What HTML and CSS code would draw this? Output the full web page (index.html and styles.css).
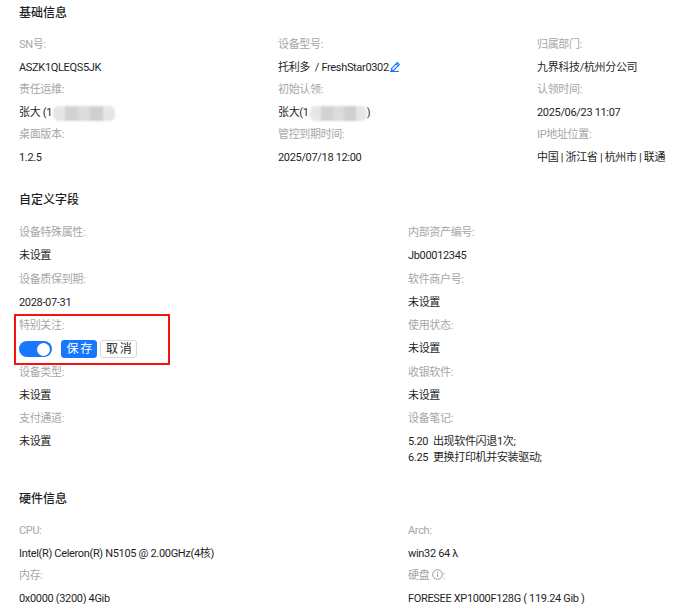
FILE: index.html
```html
<!DOCTYPE html>
<html lang="zh-CN">
<head>
<meta charset="utf-8">
<title>设备详情</title>
<link rel="stylesheet" href="styles.css">
</head>
<body>
<main class="page">
  <section class="basic">
    <h2 class="title">基础信息</h2>
    <div class="grid three">
      <div class="cell"><div class="label">SN号:</div><div class="value">ASZK1QLEQS5JK</div></div>
      <div class="cell"><div class="label">设备型号:</div><div class="value">托利多&nbsp; / FreshStar0302<svg class="pen" width="11" height="11" viewBox="0 0 11 11" fill="none" stroke="#1677ff" stroke-width="1.2"><path d="M1.5 7.6 7.3 1.6l2 2L3.5 9.4H1.5z"/><path d="M6.2 2.9l1.9 1.9"/><path d="M0 10.5h9"/></svg></div></div>
      <div class="cell"><div class="label">归属部门:</div><div class="value">九界科技/杭州分公司</div></div>
      <div class="cell"><div class="label">责任运维:</div><div class="value">张大 (1<span class="mask m1"></span></div></div>
      <div class="cell"><div class="label">初始认领:</div><div class="value">张大(1<span class="mask m2"></span>)</div></div>
      <div class="cell"><div class="label">认领时间:</div><div class="value">2025/06/23 11:07</div></div>
      <div class="cell"><div class="label">桌面版本:</div><div class="value">1.2.5</div></div>
      <div class="cell"><div class="label">管控到期时间:</div><div class="value">2025/07/18 12:00</div></div>
      <div class="cell"><div class="label">IP地址位置:</div><div class="value">中国 | 浙江省 | 杭州市 | 联通</div></div>
    </div>
  </section>
  <section class="custom">
    <h2 class="title">自定义字段</h2>
    <div class="grid two tall">
      <div class="cell"><div class="label">设备特殊属性:</div><div class="value">未设置</div></div>
      <div class="cell"><div class="label">内部资产编号:</div><div class="value">Jb00012345</div></div>
      <div class="cell"><div class="label">设备质保到期:</div><div class="value">2028-07-31</div></div>
      <div class="cell"><div class="label">软件商户号:</div><div class="value">未设置</div></div>
      <div class="cell highlighted">
        <div class="label">特别关注:</div>
        <div class="value controls">
          <span class="switch"><span class="knob"></span></span>
          <button class="btn primary">保 存</button>
          <button class="btn">取 消</button>
        </div>
      </div>
      <div class="cell"><div class="label">使用状态:</div><div class="value">未设置</div></div>
      <div class="cell"><div class="label">设备类型:</div><div class="value">未设置</div></div>
      <div class="cell"><div class="label">收银软件:</div><div class="value">未设置</div></div>
      <div class="cell"><div class="label">支付通道:</div><div class="value">未设置</div></div>
      <div class="cell"><div class="label">设备笔记:</div><div class="value notes">5.20&nbsp; 出现软件闪退1次;<br>6.25&nbsp; 更换打印机并安装驱动;</div></div>
    </div>
  </section>
  <section class="hardware">
    <h2 class="title">硬件信息</h2>
    <div class="grid two">
      <div class="cell"><div class="label">CPU:</div><div class="value">Intel(R) Celeron(R) N5105 @ 2.00GHz(4核)</div></div>
      <div class="cell"><div class="label">Arch:</div><div class="value">win32 64 λ</div></div>
      <div class="cell"><div class="label">内存:</div><div class="value">0x0000 (3200) 4Gib</div></div>
      <div class="cell"><div class="label">硬盘 <svg class="info" width="11" height="11" viewBox="0 0 11 11" fill="none" stroke="#999"><circle cx="5.5" cy="5.5" r="4.8"/><path d="M5.5 4.8v3.2M5.5 2.8v1"/></svg>:</div><div class="value">FORESEE XP1000F128G ( 119.24 Gib )</div></div>
    </div>
  </section>
</main>
</body>
</html>
```
FILE: styles.css
```css
html, body {
  margin: 0;
  padding: 0;
  background: #fff;
}
body {
  font-family: Roboto, "Noto Sans CJK SC", sans-serif;
  font-size: 11px;
  line-height: 16px;
  letter-spacing: -0.33px;
  color: #1f1f1f;
  overflow: hidden;
  height: 604px;
}
.page {
  padding: 4px 0 0 19px;
}
.title {
  margin: 0;
  font-size: 12px;
  font-weight: 500;
  line-height: 18px;
  letter-spacing: 0;
  color: #1f1f1f;
}
.grid {
  display: grid;
  margin-top: 15px;
}
.three { grid-template-columns: 259px 259px 1fr; }
.two { grid-template-columns: 389px 1fr; }
.cell {
  display: flex;
  flex-direction: column;
  gap: 7px;
  height: 45px;
  position: relative;
}
.tall { margin-top: 16px; }
.tall .cell { height: 46.5px; }
.label { color: #a6a6a6; }
.value { white-space: nowrap; }
.notes { line-height: 16px; }
.custom { margin-top: 19px; }
.hardware { margin-top: 32px; }
.mask {
  display: inline-block;
  vertical-align: middle;
  height: 15px;
  background: linear-gradient(90deg, #e6e6e6 0 20%, #d2d2d2 20% 40%, #dcdcdc 40% 60%, #cfcfcf 60% 80%, #e6e6e6 80%);
  border-radius: 5px;
  filter: blur(1px);
}
.m1 { width: 62px; margin-left: 1px; }
.m2 { width: 57px; margin-left: 1px; }
.pen { vertical-align: -1px; margin-left: 1px; }
.info { vertical-align: -1px; }
.controls {
  display: flex;
  align-items: center;
  gap: 9px;
  margin-top: -1px;
}
.switch {
  width: 33px;
  height: 16px;
  border-radius: 8px;
  background: #1677ff;
  position: relative;
  flex: none;
}
.knob {
  position: absolute;
  right: 2px;
  top: 1.5px;
  width: 13px;
  height: 13px;
  background: #fff;
  border-radius: 50%;
}
.btn {
  font: inherit;
  font-size: 12px;
  letter-spacing: -0.6px;
  height: 18px;
  width: 36px;
  padding: 0;
  border: 1px solid #d9d9d9;
  border-radius: 3px;
  background: #fff;
  color: #1f1f1f;
  margin-left: -6px;
  line-height: 16px;
}
.btn:not(.primary) { width: 37px; }
.controls .btn.primary { margin-left: 0; }
.primary {
  background: #1677ff;
  border-color: #1677ff;
  color: #fff;
}
.highlighted::after {
  content: "";
  position: absolute;
  left: -5.5px;
  top: -4.5px;
  width: 152.5px;
  height: 47.5px;
  border: 2px solid #f5130d;
}
```
